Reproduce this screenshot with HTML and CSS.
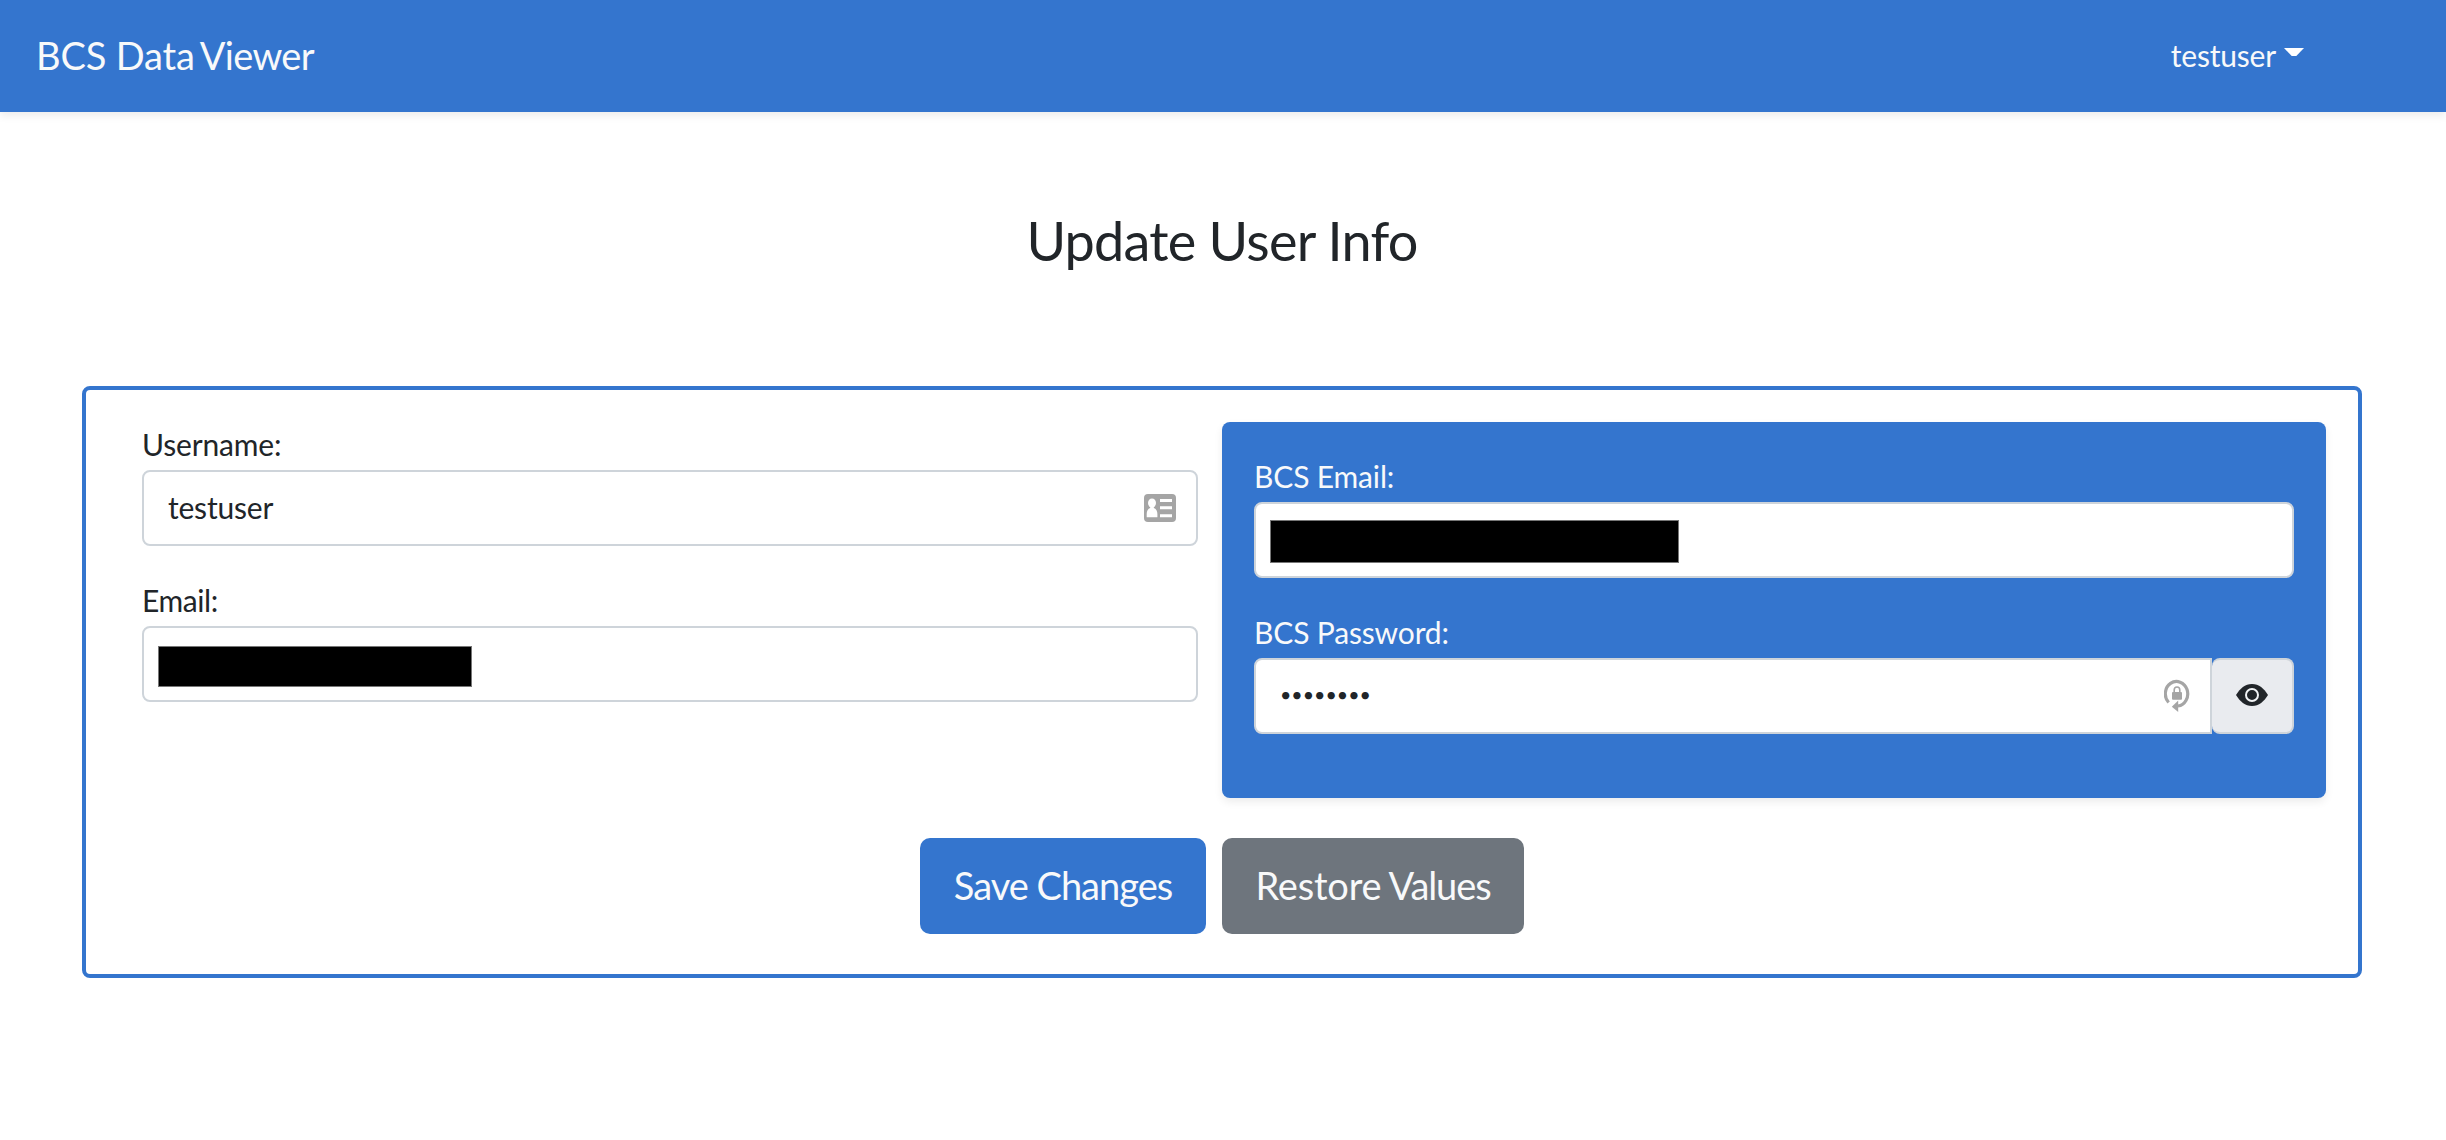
FILE: index.html
```html
<!DOCTYPE html>
<html lang="en">
<head>
<meta charset="utf-8">
<title>BCS Data Viewer</title>
<link rel="stylesheet" href="styles.css">
</head>
<body>
<nav class="navbar">
  <a class="brand"><span>BCS Data</span><span class="brand-tail"> Viewer</span></a>
  <a class="user-menu"><span>testuser</span><svg class="caret" viewBox="0 0 20 8"><path d="M0 0H20L12.3 8H7.7Z"/></svg></a>
</nav>
<main>
  <h1 class="title">Update User Info</h1>
  <form class="card">
    <div class="columns">
      <section class="account">
        <div class="group">
          <label class="label">Username:</label>
          <div class="field">
            <span class="value">testuser</span>
            <svg class="contact-icon" viewBox="0 0 32 28"><rect width="32" height="28" rx="4" fill="#a5a5a5"/><g fill="#fff"><ellipse cx="8" cy="9" rx="4" ry="4.6"/><path d="M6.2 11h3.6v3c2.4.8 3.6 3 3.6 6v3.3H2.7V20c0-3 1.2-5.200 3.500-6zM16 5h12v3H16zM16 12.200h12v3H16zM16 20.200h12v3H16z"/></g></svg>
          </div>
        </div>
        <div class="group">
          <label class="label label-tight">Email:</label>
          <div class="field"><span class="redacted"></span></div>
        </div>
      </section>
      <section class="panel">
        <div class="group">
          <label class="label">BCS Email:</label>
          <div class="field"><span class="redacted redacted-wide"></span></div>
        </div>
        <div class="group">
          <label class="label">BCS Password:</label>
          <div class="input-group">
            <div class="field field-joined">
              <span class="dots">••••••••</span>
              <svg class="lock-icon" viewBox="0 0 26 34"><path d="M4.600 23.500A11.200 12.300 0 1 1 14 27" fill="none" stroke="#a5a5a5" stroke-width="3.200"/><path d="M7.800 27.700 14.200 21.500V33z" fill="#a5a5a5"/><rect x="8" y="13" width="10" height="7.700" rx="1" fill="#a5a5a5"/><path d="M10.200 13.500v-2.500a2.800 3 0 0 1 5.600 0v2.500" fill="none" stroke="#a5a5a5" stroke-width="1.600"/></svg>
            </div>
            <button type="button" class="reveal" aria-label="Show password"><svg class="eye" viewBox="0 0 32 22"><path d="M0 11C4 4.500 9 0 16 0s12 4.500 16 11c-4 6.500-9 11-16 11S4 17.500 0 11z" fill="#212529"/><circle cx="16" cy="11" r="6" fill="#212529" stroke="#f1f3f5" stroke-width="2"/></svg></button>
          </div>
        </div>
      </section>
    </div>
    <div class="actions">
      <button type="button" class="btn btn-save">Save Changes</button>
      <button type="button" class="btn btn-restore">Restore<span class="restore-tail"> Values</span></button>
    </div>
  </form>
</main>
</body>
</html>
```
FILE: styles.css
```css
* { box-sizing: border-box; }
body { margin: 0; background: #fff; color: #212529; font-family: Lato, "Liberation Sans", sans-serif; font-size: 30px; }
.navbar { height: 112px; padding: 0 142px 0 36px; display: flex; align-items: center; justify-content: space-between; background: #3475ce; color: #f8f9fa; box-shadow: 0 4px 8px rgba(0, 0, 0, .075); }
.brand { font-size: 38px; line-height: 48px; padding-bottom: 3px; letter-spacing: -.15px; }
.brand-tail { letter-spacing: -.7px; word-spacing: -2.5px; }
.user-menu { display: flex; align-items: center; font-size: 30px; line-height: 48px; padding-bottom: 2px; letter-spacing: -.2px; }
.caret { width: 20px; height: 8px; margin: 0 0 6px 8px; fill: #fff; }
.title { margin: 93px 0 0; padding-right: 2px; font-size: 54px; font-weight: 400; line-height: 72px; text-align: center; letter-spacing: -.75px; }
.card { margin: 109px 84px 0 82px; height: 592px; padding: 32px; border: 4px solid #3475ce; border-radius: 8px; }
.columns { display: flex; gap: 24px; height: 376px; }
.account { width: 1080px; padding-left: 24px; }
.panel { flex: 1; padding: 32px; border-radius: 8px; background: #3475ce; color: #f8f9fa; box-shadow: 0 4px 8px rgba(0, 0, 0, .075); }
.group { margin-bottom: 32px; }
.label { display: block; height: 48px; line-height: 45px; letter-spacing: -.15px; }
.label-tight { letter-spacing: -.4px; }
.field { display: flex; align-items: center; justify-content: space-between; height: 76px; padding: 0 20px 0 24px; border: 2px solid #ced4da; border-radius: 8px; background: #fff; color: #212529; }
.value { padding-bottom: 2px; letter-spacing: -.2px; }
.dots { padding-bottom: 4px; font-size: 19.6px; }
.redacted { width: 314px; height: 41px; margin: 5px 0 0 -10px; background: #000; border: 1px solid #777; }
.redacted-wide { width: 409px; height: 43px; margin-top: 3px; }
.input-group { display: flex; }
.field-joined { flex: 1; border-radius: 8px 0 0 8px; }
.reveal { width: 82px; height: 76px; padding: 0 0 2px; border: 2px solid #ced4da; border-left: 0; border-radius: 8px; background: #e9ebef; display: flex; align-items: center; justify-content: center; }
.contact-icon { width: 32px; height: 28px; }
.lock-icon { width: 26px; height: 34px; }
.eye { width: 32px; height: 22px; }
.actions { display: flex; justify-content: center; gap: 16px; margin-top: 40px; }
.btn { width: 286px; height: 96px; border: 0; border-radius: 10px; padding: 0 0 3px; color: #f8f9fa; font: 38px/60px Lato, "Liberation Sans", sans-serif; background: #3475ce; }
.btn-save { letter-spacing: -1px; }
.btn-restore { width: 302px; background: #6e757d; letter-spacing: -.2px; }
.restore-tail { letter-spacing: -1.1px; }
```
